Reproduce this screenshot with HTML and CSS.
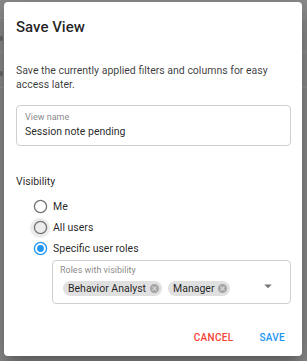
FILE: index.html
```html
<!DOCTYPE html>
<html lang="en">
<head>
    <meta charset="UTF-8">
    <meta name="viewport" content="width=device-width, initial-scale=1.0">
    <title>Save View</title>
    <link rel="stylesheet" href="styles.css">
</head>
<body>

    <!-- page behind the modal -->
    <div class="page">
        <div class="page-row page-row-head"></div>
        <div class="page-row"><span class="cell"></span></div>
        <div class="page-row"><span class="cell"></span></div>
    </div>

    <div class="dialog" role="dialog">
        <h2 class="dialog-title">Save View</h2>
        <div class="dialog-content">
            <p class="intro">Save the currently applied filters and columns for easy access later.</p>

            <div class="field">
                <label class="field-label" for="view_name">View name</label>
                <input class="field-input" id="view_name" type="text" value="Session note pending">
            </div>

            <div class="group-label">Visibility</div>
            <div class="radio-row">
                <span class="radio">
                    <svg viewBox="0 0 24 24" width="20" height="20"><circle cx="12" cy="12" r="8.6" fill="none" stroke="#757575" stroke-width="1.9"/></svg>
                </span>
                <span class="radio-text">Me</span>
            </div>
            <div class="radio-row">
                <span class="radio radio-hover">
                    <svg viewBox="0 0 24 24" width="20" height="20"><circle cx="12" cy="12" r="8.6" fill="none" stroke="#757575" stroke-width="1.9"/></svg>
                </span>
                <span class="radio-text">All users</span>
            </div>
            <div class="radio-row">
                <span class="radio">
                    <svg viewBox="0 0 24 24" width="20" height="20"><circle cx="12" cy="12" r="8.6" fill="none" stroke="#2196f3" stroke-width="1.9"/><circle cx="12" cy="12" r="4.8" fill="#2196f3"/></svg>
                </span>
                <span class="radio-text">Specific user roles</span>
            </div>

            <div class="select">
                <div class="select-main">
                    <div class="field-label">Roles with visibility</div>
                    <div class="chips">
                        <span class="chip">Behavior Analyst
                            <svg class="chip-x" viewBox="0 0 24 24"><path d="M12 2C6.47 2 2 6.470 2 12s4.47 10 10 10 10-4.47 10-10S17.53 2 12 2zm5 13.59L15.59 17 12 13.41 8.41 17 7 15.59 10.59 12 7 8.410 8.41 7 12 10.59 15.59 7 17 8.41 13.41 12 17 15.59z"/></svg>
                        </span>
                        <span class="chip">Manager
                            <svg class="chip-x" viewBox="0 0 24 24"><path d="M12 2C6.47 2 2 6.47 2 12s4.47 10 10 10 10-4.47 10-10S17.53 2 12 2zm5 13.59L15.59 17 12 13.41 8.41 17 7 15.59 10.59 12 7 8.41 8.41 7 12 10.59 15.59 7 17 8.41 13.41 12 17 15.59z"/></svg>
                        </span>
                    </div>
                </div>
                <svg class="select-arrow" viewBox="0 0 24 24" width="18" height="18"><path d="M7 10l5 5 5-5z"/></svg>
            </div>
        </div>

        <div class="dialog-actions">
            <button type="button" class="btn btn-cancel">Cancel</button>
            <button type="button" class="btn btn-save">Save</button>
        </div>
    </div>

</body>
</html>
```

FILE: styles.css
```css
body {
    margin: 0;
    width: 307px;
    height: 361px;
    overflow: hidden;
    position: relative;
    background: #8b8b8b;
    font-family: Roboto, "Liberation Sans", Arial, sans-serif;
    color: rgba(0, 0, 0, 0.87);
}
.page-row {
    height: 34px;
    border-bottom: 1px solid #959595;
    display: flex;
    align-items: center;
}
.page-row-head {
    height: 17px;
}
.cell {
    display: block;
    width: 3px;
    height: 5px;
    margin-top: 6px;
    border-radius: 0 2px 2px 0;
    background: #6a6a6a;
}
.dialog {
    position: absolute;
    left: 4px;
    top: 2px;
    width: 298px;
    height: 354px;
    box-sizing: border-box;
    background: #fff;
    border-radius: 4px;
    box-shadow: 0 8px 10px -5px rgba(0, 0, 0, 0.2), 0 16px 24px 2px rgba(0, 0, 0, 0.14), 0 6px 30px 5px rgba(0, 0, 0, 0.12);
    display: flex;
    flex-direction: column;
}
.dialog-title {
    margin: 0;
    padding: 15px 12px 0;
    font-size: 15px;
    line-height: 20px;
    font-weight: 500;
}
.dialog-content {
    flex: 1;
    padding: 0 11px 0 12px;
}
.intro {
    margin: 27px 0 0;
    font-size: 10.5px;
    line-height: 14px;
    color: rgba(0, 0, 0, 0.78);
}
.field {
    margin-top: 13px;
    height: 41px;
    box-sizing: border-box;
    border: 1px solid #cfcfcf;
    border-radius: 4px;
    padding: 6px 8px 0;
}
.field-label {
    display: block;
    font-size: 9px;
    line-height: 11px;
    color: rgba(0, 0, 0, 0.5);
}
.field-input {
    display: block;
    width: 100%;
    margin-top: 2px;
    padding: 0;
    border: none;
    outline: none;
    font-family: inherit;
    font-size: 10.5px;
    line-height: 14px;
    height: 14px;
    color: rgba(0, 0, 0, 0.87);
    background: transparent;
}
.group-label {
    margin-top: 29px;
    font-size: 10.5px;
    line-height: 14px;
}
.radio-row {
    display: flex;
    align-items: center;
    height: 21px;
    padding-left: 14px;
}
.group-label + .radio-row {
    margin-top: 7px;
}
.radio {
    width: 20px;
    height: 20px;
    display: flex;
    align-items: center;
    justify-content: center;
    border-radius: 50%;
    margin-right: 3px;
}
.radio-hover {
    background: #ececec;
}
.radio svg {
    width: 17px;
    height: 17px;
}
.radio-text {
    font-size: 10.5px;
    line-height: 14px;
}
.select {
    margin: 1px 0 0 36px;
    height: 44px;
    box-sizing: border-box;
    border: 1px solid #cfcfcf;
    border-radius: 4px;
    padding: 4px 7px 0;
    display: flex;
    align-items: flex-start;
}
.select-main {
    flex: 1;
}
.chips {
    display: flex;
    gap: 6px;
    margin: 5px 0 0 3px;
}
.chip {
    display: inline-flex;
    align-items: center;
    height: 15px;
    padding: 0 2px 0 5px;
    border-radius: 8px;
    background: #e0e0e0;
    font-size: 10.5px;
    line-height: 15px;
    white-space: nowrap;
}
.chip-x {
    width: 11px;
    height: 11px;
    margin-left: 3px;
    fill: rgba(0, 0, 0, 0.26);
}
.select-arrow {
    margin: 12px 6px 0 0;
    fill: rgba(0, 0, 0, 0.54);
}
.dialog-actions {
    display: flex;
    justify-content: flex-end;
    gap: 14px;
    padding: 0 11px 6px 0;
}
.btn {
    background: none;
    border: none;
    padding: 0 6px;
    height: 24px;
    font-family: inherit;
    font-size: 10px;
    line-height: 24px;
    font-weight: 500;
    letter-spacing: 0.3px;
    text-transform: uppercase;
    cursor: pointer;
}
.btn-cancel {
    color: #f44336;
}
.btn-save {
    color: #2196f3;
}
```
